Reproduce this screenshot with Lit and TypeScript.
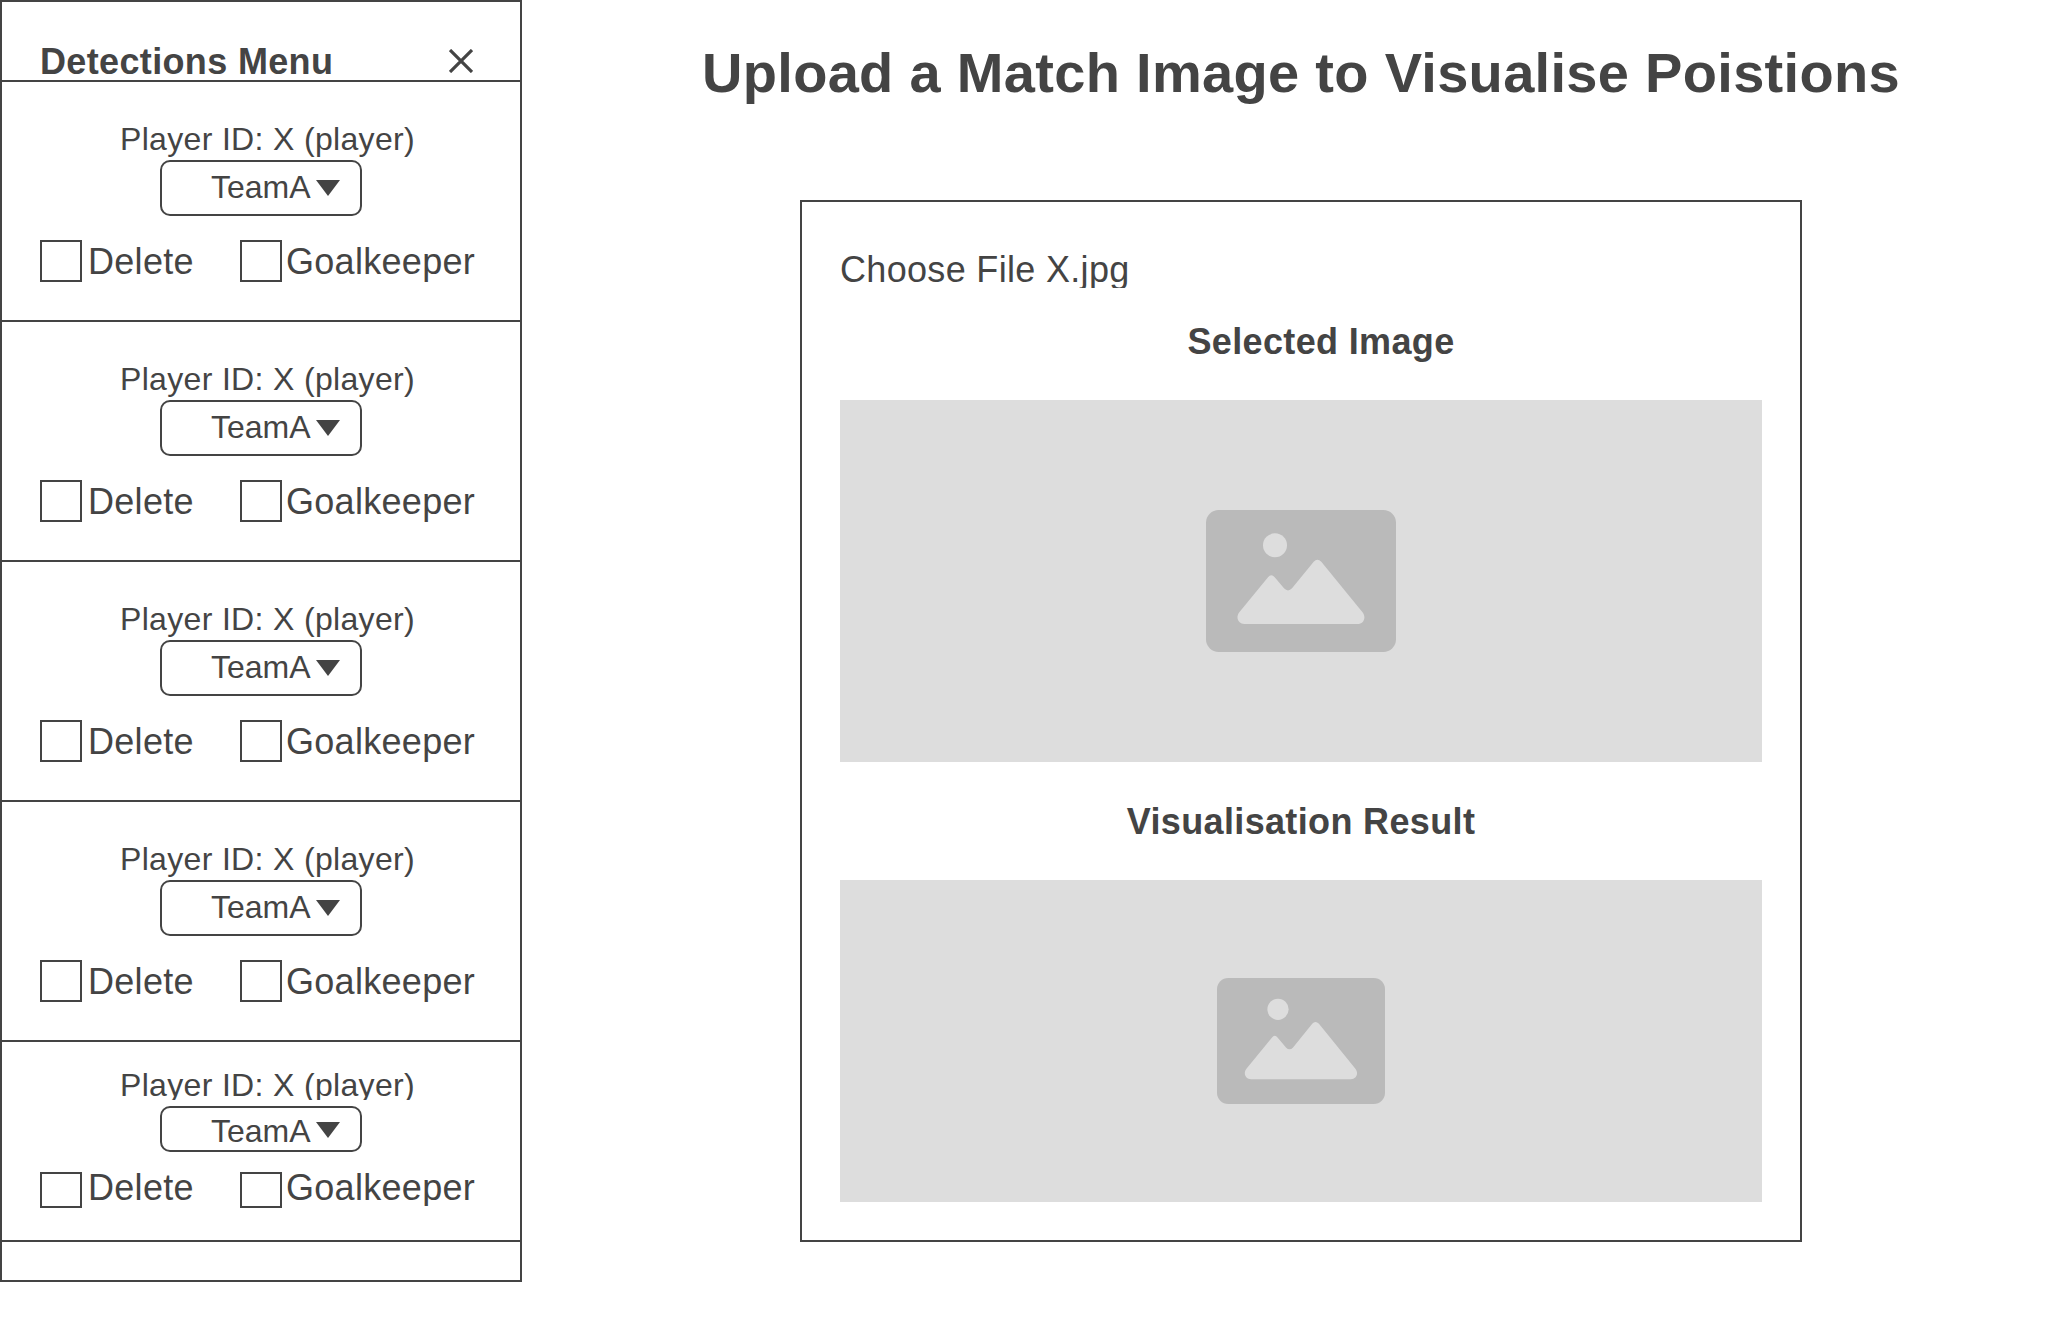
import { LitElement, html, css } from "lit";
import { customElement, property } from "lit/decorators.js";
import { classMap } from "lit/directives/class-map.js";

@customElement("player-card")
class PlayerCard extends LitElement {
  @property({ type: Boolean }) compact = false;

  static styles = css`
    :host { display: block; }
    .card { box-sizing: border-box; height: 240px; padding: 41px 0 0 38px; border-bottom: 2px solid #444; }
    .name { margin: 0 0 5px 80px; height: 32px; font-size: 32px; line-height: 32px; letter-spacing: 0.33px; white-space: nowrap; }
    .select { box-sizing: border-box; display: flex; align-items: flex-start; width: 202px; height: 56px; margin-left: 120px; padding: 0 20px 0 49px; border: 2px solid #444; border-radius: 10px; font-size: 32px; line-height: 50px; }
    .arrow { display: block; margin: 18px 0 0 auto; }
    .checks { display: flex; margin-top: 24px; font-size: 36px; line-height: 43px; }
    .check { display: flex; width: 200px; height: 42px; }
    .check.wide { width: 240px; }
    .box { box-sizing: border-box; flex: none; width: 42px; height: 100%; border: 2px solid #444; }
    .text { flex: none; margin-left: 6px; letter-spacing: 0.3px; white-space: nowrap; }
    .wide .text { margin-left: 4px; }
    .compact.card { height: 200px; padding-top: 27px; }
    .compact .name { height: 31px; margin-bottom: 6px; overflow: hidden; }
    .compact .select { height: 46px; line-height: 46px; }
    .compact .arrow { margin-top: 14px; }
    .compact .checks { margin-top: 20px; line-height: 31px; }
    .compact .check { height: 36px; }
    .compact .text { height: 34px; overflow: hidden; }
  `;

  render() {
    return html`
      <div class=${classMap({ card: true, compact: this.compact })}>
        <div class="name">Player ID: X (player)</div>
        <div class="select">
          <span>TeamA</span>
          <svg class="arrow" width="24" height="16" viewBox="0 0 24 16"><path d="M0 0H24L12 16Z" fill="#444" /></svg>
        </div>
        <div class="checks">
          <div class="check"><span class="box"></span><span class="text">Delete</span></div>
          <div class="check wide"><span class="box"></span><span class="text">Goalkeeper</span></div>
        </div>
      </div>
    `;
  }
}

@customElement("image-placeholder")
class ImagePlaceholder extends LitElement {
  @property({ type: Number }) size = 190;

  static styles = css`
    :host { display: flex; align-items: center; justify-content: center; background: #ddd; }
    svg { display: block; }
  `;

  render() {
    return html`
      <svg width=${this.size} height=${Math.round((this.size * 142) / 190)} viewBox="0 0 190 142" preserveAspectRatio="none">
        <rect width="190" height="142" rx="12.7" fill="#bababa" />
        <circle cx="69" cy="35.3" r="12" fill="#ddd" />
        <path fill="#ddd" d="M38.5 114C32.5 114 29 107.5 33.5 102L62 67.3Q65.3 63 68.7 67.3L78 78.3Q82 82.5 86 78.3L107.7 51.7Q111.3 47.7 115.3 51.7L156.3 102C160.8 107.5 157.5 114 151.5 114Z" />
      </svg>
    `;
  }
}

@customElement("app-root")
class AppRoot extends LitElement {
  static styles = css`
    :host { display: flex; align-items: flex-start; width: 2048px; height: 1322px; overflow: hidden; background: #fff; color: #444; font-family: "Liberation Sans", Arial, sans-serif; }
    .sidebar { box-sizing: border-box; flex: none; width: 522px; height: 1282px; border: 2px solid #444; }
    .header { box-sizing: border-box; display: flex; align-items: flex-start; justify-content: space-between; height: 80px; padding: 41px 47px 0 38px; border-bottom: 2px solid #444; }
    .heading { margin: 0; font-size: 36px; font-weight: bold; line-height: 37px; letter-spacing: 0.35px; white-space: nowrap; }
    .close { display: block; margin-top: 6px; }
    .main { flex: none; width: 1240px; margin-left: 180px; }
    .title { margin: 0; padding-top: 40px; font-size: 56px; line-height: 65px; letter-spacing: 0.31px; white-space: nowrap; }
    .panel { box-sizing: border-box; width: 1002px; height: 1042px; margin: 95px 0 0 98px; padding: 47px 38px 0; border: 2px solid #444; }
    .file { height: 39px; overflow: hidden; font-size: 36px; line-height: 41px; letter-spacing: 0.32px; white-space: nowrap; }
    .sub { margin: 0; font-size: 36px; line-height: 41px; letter-spacing: 0.35px; white-space: nowrap; text-align: center; }
    .selected { padding: 33px 0 38px 40px; }
    .result { padding: 39px 0 38px; }
    .first { height: 362px; }
    .second { height: 322px; }
  `;

  render() {
    return html`
      <aside class="sidebar">
        <div class="header">
          <h2 class="heading">Detections Menu</h2>
          <svg class="close" width="24" height="24" viewBox="0 0 24 24"><path d="M1 1L23 23M23 1L1 23" stroke="#444" stroke-width="3.2" fill="none" /></svg>
        </div>
        ${[false, false, false, false, true].map((c) => html`<player-card ?compact=${c}></player-card>`)}
      </aside>
      <main class="main">
        <h1 class="title">Upload a Match Image to Visualise Poistions</h1>
        <section class="panel">
          <div class="file">Choose File X.jpg</div>
          <h3 class="sub selected">Selected Image</h3>
          <image-placeholder class="first" size="190"></image-placeholder>
          <h3 class="sub result">Visualisation Result</h3>
          <image-placeholder class="second" size="168"></image-placeholder>
        </section>
      </main>
    `;
  }
}
